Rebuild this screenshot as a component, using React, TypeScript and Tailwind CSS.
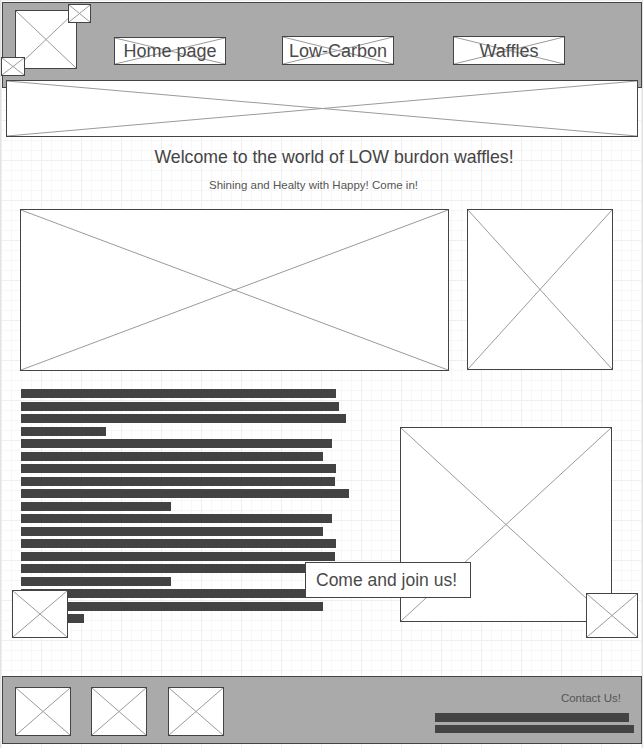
import React from "react";

const bars = [315, 318, 325, 85, 311, 302, 315, 314, 328, 150, 311, 302, 315, 314, 328, 150, 311, 302, 63];

function Ph({ className = "", abs = false, children }: { className?: string; abs?: boolean; children?: React.ReactNode }) {
  return (
    <div className={`${abs ? "absolute" : "relative"} box-border bg-white border border-[#444] ${className}`}>
      <svg className="absolute inset-0 w-full h-full" viewBox="0 0 100 100" preserveAspectRatio="none">
        <line x1="0" y1="0" x2="100" y2="100" stroke="#9a9a9a" strokeWidth="1" vectorEffect="non-scaling-stroke" />
        <line x1="100" y1="0" x2="0" y2="100" stroke="#9a9a9a" strokeWidth="1" vectorEffect="non-scaling-stroke" />
      </svg>
      {children}
    </div>
  );
}

function NavBtn({ label, className }: { label: string; className: string }) {
  return (
    <Ph className={`w-[112px] flex items-center justify-center ${className}`}>
      <span className="relative text-[18px] leading-[18px] text-[#4a4a4a]">{label}</span>
    </Ph>
  );
}

export default function App() {
  return (
    <div className="relative w-[643px] h-[748px] overflow-hidden bg-white font-['Liberation_Sans',Arial,sans-serif] border-x border-[#e2e2e2] bg-[linear-gradient(to_right,#efefef_1px,transparent_1px),linear-gradient(to_bottom,#efefef_1px,transparent_1px),linear-gradient(to_right,#f7f7f7_1px,transparent_1px),linear-gradient(to_bottom,#f7f7f7_1px,transparent_1px)] bg-[size:40px_40px,40px_40px,10px_10px,10px_10px]">
      {/* header */}
      <div className="mt-[2px] ml-[1px] w-[640px] h-[86px] box-border bg-[#aaaaaa] border border-[#444] flex items-start">
        <div className="relative ml-[12px] mt-[7px] w-[62px] h-[59px]">
          <Ph className="w-full h-full" />
          <Ph abs className="left-[53px] -top-[6px] w-[23px] h-[19px]" />
          <Ph abs className="-left-[14px] top-[47px] w-[24px] h-[19px]" />
        </div>
        <NavBtn label="Home page" className="ml-[37px] mt-[34px] h-[28px]" />
        <NavBtn label="Low-Carbon" className="ml-[56px] mt-[33px] h-[29px]" />
        <NavBtn label="Waffles" className="ml-[59px] mt-[33px] h-[29px]" />
      </div>

      {/* banner */}
      <Ph className="-mt-[8px] ml-[5px] w-[632px] h-[57px] z-10" />

      <div className="mt-[11px] pl-[25px] text-center text-[17.7px] leading-[18px] text-[#444]">
        Welcome to the world of LOW burdon waffles!
      </div>
      <div className="mt-[13px] pr-[16px] text-center text-[11.5px] leading-[12px] text-[#555]">
        Shining and Healty with Happy! Come in!
      </div>

      <div className="mt-[18px] flex items-start">
        <Ph className="ml-[19px] w-[429px] h-[162px]" />
        <Ph className="ml-[18px] w-[146px] h-[161px]" />
      </div>

      <div className="mt-[18px] flex items-start">
        <div className="ml-[20px] w-[379px] flex flex-col gap-[3.5px]">
          {bars.map((w, i) => (
            <div key={i} className="h-[9px] bg-[#434343]" style={{ width: w }} />
          ))}
        </div>
        <Ph className="mt-[38px] w-[212px] h-[195px]" />
      </div>

      {/* footer */}
      <div className="mt-[53px] ml-[1px] w-[640px] h-[68px] box-border bg-[#aaaaaa] border border-[#444] flex items-start justify-between">
        <div className="ml-[12px] mt-[10px] flex">
          <Ph className="w-[56px] h-[49px]" />
          <Ph className="ml-[20px] w-[56px] h-[49px]" />
          <Ph className="ml-[21px] w-[56px] h-[49px]" />
        </div>
        <div className="mr-[7px] mt-[14.5px] flex flex-col items-end">
          <div className="mr-[13px] text-[11.5px] leading-[12px] text-[#555]">Contact Us!</div>
          <div className="mt-[9px] mr-[5px] w-[194px] h-[9px] bg-[#434343]" />
          <div className="mt-[3px] w-[199px] h-[8px] bg-[#434343]" />
        </div>
      </div>

      {/* overlays */}
      <div className="absolute left-[304px] top-[562px] w-[166px] h-[36px] box-border bg-white border border-[#444] flex items-center pl-[10px] text-[17.5px] text-[#4a4a4a]">
        Come and join us!
      </div>
      <Ph abs className="left-[11px] top-[590px] w-[56px] h-[48px]" />
      <Ph abs className="left-[585px] top-[593px] w-[52px] h-[45px]" />
    </div>
  );
}
